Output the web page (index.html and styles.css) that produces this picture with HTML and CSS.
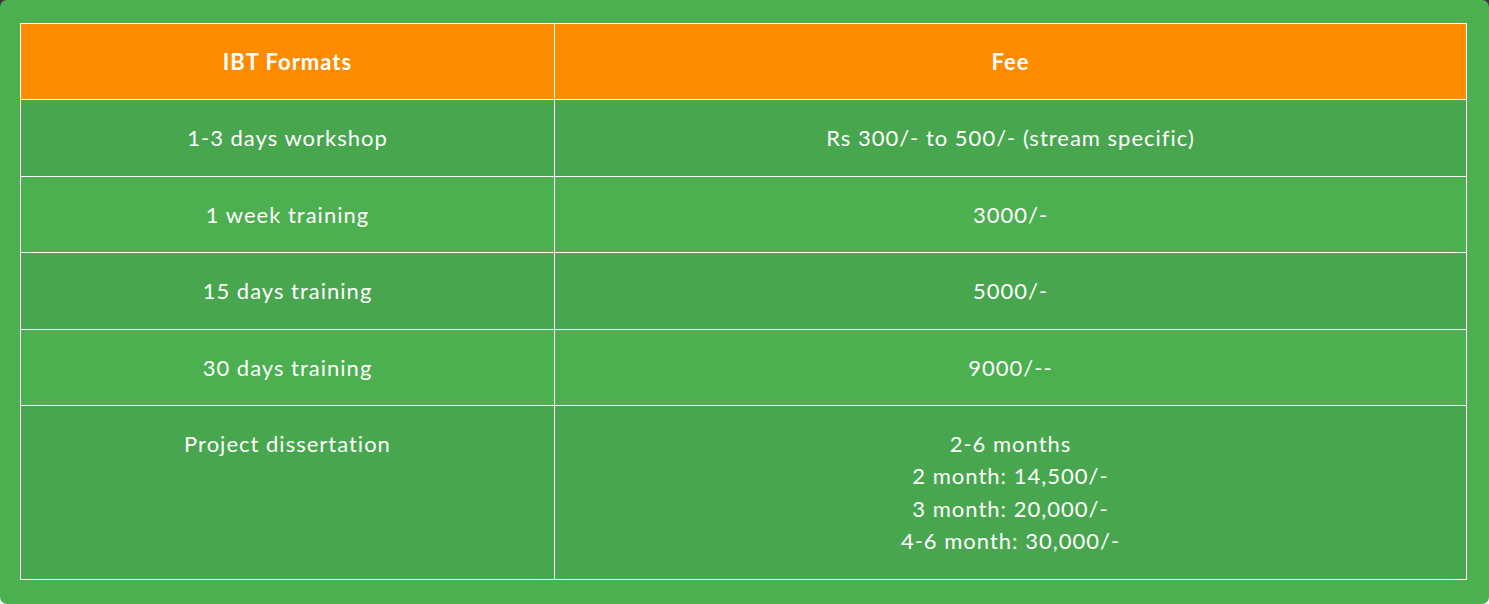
FILE: index.html
```html
<!DOCTYPE html>
<html lang="en">
<head>
<meta charset="utf-8">
<title>IBT Formats</title>
<link rel="stylesheet" href="styles.css">
</head>
<body>
<div class="panel">
  <table class="fees">
    <thead>
      <tr><th class="col-format">IBT Formats</th><th>Fee</th></tr>
    </thead>
    <tbody>
      <tr class="dark"><td>1-3 days workshop</td><td>Rs 300/- to 500/- (stream specific)</td></tr>
      <tr class="light"><td>1 week training</td><td>3000/-</td></tr>
      <tr class="dark"><td>15 days training</td><td>5000/-</td></tr>
      <tr class="light"><td>30 days training</td><td>9000/--</td></tr>
      <tr class="dark"><td>Project dissertation</td><td>2-6 months<br>2 month: 14,500/-<br>3 month: 20,000/-<br>4-6 month: 30,000/-</td></tr>
    </tbody>
  </table>
</div>
</body>
</html>
```
FILE: styles.css
```css
html {
  background: linear-gradient(#3a3a3a 0, #3a3a3a 50%, #ffffff 50%, #ffffff 100%);
}
body {
  margin: 0;
  font-family: Lato, "Open Sans", sans-serif;
}
.panel {
  height: 604px;
  box-sizing: border-box;
  background: #4caf50;
  border-radius: 7px;
  padding: 23px 22px 24px 20px;
}
.fees {
  width: 100%;
  border-collapse: collapse;
  color: #ffffff;
  font-size: 22px;
  line-height: 32.4px;
  letter-spacing: 1px;
  text-align: center;
}
.fees th,
.fees td {
  border: 1px solid #ffffff;
  padding: 22px 10px 21px;
  vertical-align: top;
}
.fees th {
  background: #ff8c00;
  font-weight: 700;
}
.col-format {
  width: 534px;
  box-sizing: border-box;
}
.dark td {
  background: #48a74e;
}
.light td {
  background: #4caf50;
}
```
